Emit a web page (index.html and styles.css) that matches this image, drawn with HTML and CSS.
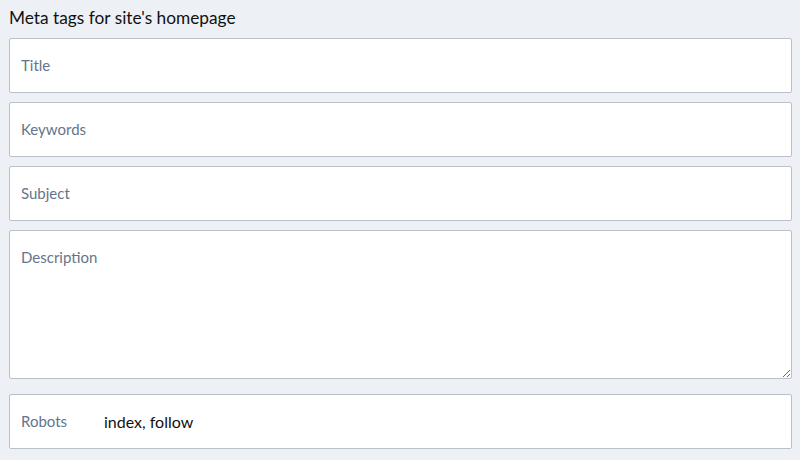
FILE: index.html
```html
<!DOCTYPE html>
<html lang="en">
<head>
    <meta charset="UTF-8">
    <title>Meta tags</title>
    <link rel="stylesheet" href="styles.css">
</head>
<body>
    <h1 class="titulo">Meta tags for site's homepage</h1>
    <div class="campos">
        <input class="campo" type="text" placeholder="Title">
        <input class="campo" type="text" placeholder="Keywords">
        <input class="campo" type="text" placeholder="Subject">
        <textarea class="campo descricao" placeholder="Description"></textarea>
        <div class="campo robots">
            <label for="robots">Robots</label>
            <input id="robots" type="text" value="index, follow">
        </div>
    </div>
</body>
</html>
```

FILE: styles.css
```css
body{
    margin: 0;
    padding: 0 8px 0 9px;
    background-color: #edf0f5;
    font-family: Lato, "Noto Sans", sans-serif;
}
.titulo{
    margin: 6px 0 8px 0;
    font-size: 17.3px;
    font-weight: 400;
    line-height: 24px;
    color: #111;
}
.campos{
    display: flex;
    flex-direction: column;
    gap: 9px;
}
.campo{
    box-sizing: border-box;
    width: 100%;
    height: 55px;
    margin: 0;
    padding: 0 11px 1px 11px;
    border: 1px solid #b9c0cc;
    border-radius: 2px;
    background-color: #fff;
    font-family: Lato, "Noto Sans", sans-serif;
    font-size: 15px;
    color: #111;
    outline: none;
}
.campo::placeholder{
    color: #66748b;
}
.descricao{
    display: block;
    height: 149px;
    padding: 17px 11px;
    resize: vertical;
}
.robots{
    display: flex;
    align-items: center;
    height: 55px;
    margin-top: 6px;
}
.robots label{
    width: 83px;
    color: #66748b;
}
.robots input{
    flex: 1;
    border: none;
    padding: 0;
    font-family: Lato, "Noto Sans", sans-serif;
    font-size: 16px;
    color: #111;
    outline: none;
}
```
